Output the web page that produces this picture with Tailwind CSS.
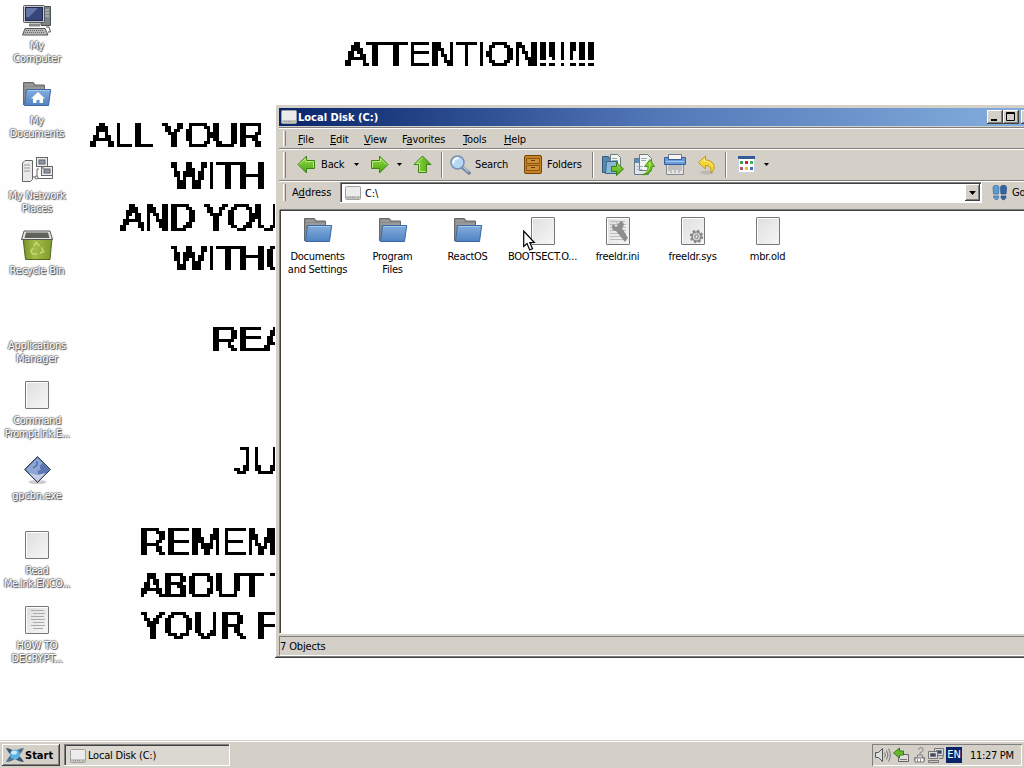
<!DOCTYPE html>
<html lang="en">
<head>
    <meta charset="UTF-8">
    <meta name="viewport" content="width=device-width, initial-scale=1.0">
    <title>Local Disk (C:)</title>
    <script src="https://cdn.jsdelivr.net/npm/@tailwindcss/browser@4"></script>
    <style>
        body {
            font-family: 'DejaVu Sans Condensed', 'DejaVu Sans', sans-serif;
            font-stretch: condensed;
        }
        /* Classic raised and sunken 3D borders */
        .raised {
            background-color: #d4d0c8;
            box-shadow: inset -1px -1px #404040, inset 1px 1px #ffffff, inset -2px -2px #808080;
        }
        .sunken {
            box-shadow: inset -1px -1px #ffffff, inset 1px 1px #808080, inset 2px 2px #404040;
        }
        .grip {
            width: 3px;
            border-left: 1px solid #ffffff;
            border-right: 1px solid #808080;
        }
        .divider {
            width: 2px;
            border-left: 1px solid #808080;
            border-right: 1px solid #ffffff;
        }
        .desk-label {
            color: #ffffff;
            letter-spacing: -0.2px;
            text-shadow: 1px 1px 1px #444444, -1px 0 1px #888888, 0 -1px 1px #999999, 0 0 2px #888888;
        }
    </style>
</head>
<body class="relative w-[1024px] h-[768px] overflow-hidden bg-[#fefefe] text-[11px] leading-[13px] text-black cursor-default">

    <!-- Shared icons -->
    <svg class="absolute size-0">
        <defs>
            <linearGradient id="blue" x1="0" y1="0" x2="0" y2="1"><stop offset="0" stop-color="#85aede"/><stop offset="1" stop-color="#4f83c2"/></linearGradient>
            <linearGradient id="paper" x1="0" y1="0" x2="1" y2="1"><stop offset="0" stop-color="#dedede"/><stop offset="1" stop-color="#f6f6f6"/></linearGradient>
            <linearGradient id="green" x1="0" y1="0" x2="0" y2="1"><stop offset="0" stop-color="#98dc48"/><stop offset="1" stop-color="#4aa512"/></linearGradient>
            <linearGradient id="bin" x1="0" y1="0" x2="1" y2="0"><stop offset="0" stop-color="#76902c"/><stop offset=".4" stop-color="#a3bd45"/><stop offset="1" stop-color="#7f9a30"/></linearGradient>
            <!-- Thickens the vertical stems, then samples the text into 3px blocks -->
            <filter id="blocks" filterUnits="userSpaceOnUse" x="0" y="0" width="1023" height="741">
                <feMorphology in="SourceGraphic" operator="dilate" radius="1 0" result="bold"/>
                <feFlood x="1" y="1" width="1" height="1" flood-color="#000"/>
                <feComposite in2="SourceGraphic" operator="over" x="0" y="0" width="3" height="3"/>
                <feTile result="grid"/>
                <feComposite in="bold" in2="grid" operator="in"/>
                <feComponentTransfer><feFuncA type="discrete" tableValues="0 1"/></feComponentTransfer>
                <feMorphology operator="dilate" radius="1"/>
            </filter>
        </defs>
        <symbol id="folder" viewBox="0 0 32 32">
            <path d="M2.500 25V2.500h10l1.500 2.500h9.500v6" fill="#8b8b8b" stroke="#686868"/>
            <path d="M4 5h8M4 8h19" stroke="#a8a8a8"/>
            <path d="M5.500 9.500h24.200L27.500 25.500H3.500Z" fill="url(#blue)" stroke="#3b68a4" stroke-linejoin="round"/>
            <path d="M6.500 10.500h22" stroke="#a5c5ec"/>
        </symbol>
        <symbol id="doc" viewBox="0 0 32 32">
            <rect x="4.500" y="1.500" width="23" height="27" rx=".5" fill="url(#paper)" stroke="#777"/>
            <path d="M5.500 27.500v-25h21" fill="none" stroke="#fff"/>
        </symbol>
        <symbol id="disk" viewBox="0 0 16 14">
            <rect x=".5" y=".5" width="15" height="13" rx="1" fill="#ececec" stroke="#a0a0a0"/>
            <path d="M1 10h14v3H1Z" fill="#c4c4c4"/>
            <path d="M3 11.500h8" stroke="#8c8c8c" stroke-dasharray="1 1"/>
            <path d="M12 11.500h2" stroke="#8fbf60"/>
        </symbol>
        <symbol id="caret" viewBox="0 0 5 3"><path d="M0 0h5L2.500 3Z" fill="#000"/></symbol>
        <symbol id="arrow" viewBox="0 0 19 19">
            <path d="M18 9.500 9.500 1v4.500h-8v8h8V18Z" fill="url(#green)" stroke="#3c8414" stroke-linejoin="round"/>
            <path d="M2.500 12.500v-6h8V3.500l6 6" fill="none" stroke="#b9ec7c"/>
        </symbol>
    </svg>

    <!-- Wallpaper message -->
    <svg class="absolute left-0 top-0" width="1024" height="740" font-family="Liberation Sans, sans-serif" font-size="36">
        <g filter="url(#blocks)">
            <text x="345" y="67" textLength="251" lengthAdjust="spacingAndGlyphs">ATTENTION!!!!!!</text>
            <text x="90" y="148" textLength="174" lengthAdjust="spacingAndGlyphs">ALL YOUR</text>
            <text x="172" y="189" textLength="93" lengthAdjust="spacingAndGlyphs">WITH</text>
            <text x="121" y="230" textLength="159" lengthAdjust="spacingAndGlyphs">AND YOU</text>
            <text x="172" y="271" textLength="122" lengthAdjust="spacingAndGlyphs">WITHO</text>
            <text x="212" y="352" textLength="76" lengthAdjust="spacingAndGlyphs">REA</text>
            <text x="233" y="474" textLength="46" lengthAdjust="spacingAndGlyphs">JU</text>
            <text x="140" y="555" textLength="137" lengthAdjust="spacingAndGlyphs">REMEM</text>
            <text x="140" y="598" textLength="153" lengthAdjust="spacingAndGlyphs">ABOUT T</text>
            <text x="140" y="638" textLength="138" lengthAdjust="spacingAndGlyphs">YOUR F</text>
        </g>
    </svg>

    <!-- Desktop icons -->
    <div class="relative w-[74px] grid auto-rows-[75px] text-center">
        <div class="pt-[5px] flex flex-col items-center">
            <svg class="h-8 w-8 shrink-0" viewBox="0 0 32 32">
                <path d="M20 1.500h9.500v19H20Z" fill="#7e8588" stroke="#4d5254"/>
                <path d="M24 5h4M24 8h4M24 11h4" stroke="#c3c9ca"/>
                <rect x="2.500" y=".5" width="21" height="17" rx="1" fill="#c9cbc9" stroke="#55585c"/>
                <rect x="4.500" y="2.500" width="17" height="13" fill="#36457a" stroke="#1e2850"/>
                <path d="M5 3h12L8 12H5Z" fill="#6475a8"/>
                <path d="M8 18.500h11v3H8Z" fill="#888"/>
                <path d="M4 23.500h20l3 6.500H1.500Z" fill="#b8b8b8" stroke="#555"/>
                <path d="M5 25.500h17M4 27.500h20" stroke="#666" stroke-dasharray="1 1"/>
                <path d="M25 22h3l1.500 5h-2.500" fill="none" stroke="#555"/>
            </svg>
            <div class="desk-label mt-[2px]">My<br>Computer</div>
        </div>
        <div class="pt-[5px] flex flex-col items-center">
            <svg class="h-8 w-8 shrink-0" viewBox="0 0 32 32">
                <use href="#folder"/>
                <path d="m17 12 7 6.500h-2V23h-3.500v-3h-3v3H12v-4.500h-2Z" fill="#fff"/>
            </svg>
            <div class="desk-label mt-[2px]">My<br>Documents</div>
        </div>
        <div class="pt-[5px] flex flex-col items-center">
            <svg class="h-8 w-8 shrink-0" viewBox="0 0 32 32" fill="#e9e9e9" stroke="#666">
                <path d="M1.500 8 4 5.500h7.500v19l-2 2h-8Z"/>
                <path d="M3 10h6M3 13h6M3 16h6" stroke="#999"/>
                <rect x="15.500" y="2.500" width="11" height="9"/><rect x="18" y="5" width="6" height="4" fill="#8994ad"/>
                <rect x="20.500" y="11.500" width="11" height="9"/><rect x="23" y="14" width="6" height="4" fill="#8994ad"/>
                <path d="M11 22h5v-8h2M15 23.500h16.500v-3M22 11v3" fill="none"/>
                <circle cx="15.500" cy="22.500" r="1.500"/>
            </svg>
            <div class="desk-label mt-[2px] whitespace-nowrap">My Network<br>Places</div>
        </div>
        <div class="pt-[5px] flex flex-col items-center">
            <svg class="h-8 w-8 shrink-0" viewBox="0 0 32 32">
                <path d="M2 8h29l-2 21.500H4.500Z" fill="url(#bin)" stroke="#52661d"/>
                <path d="M3 1h26l2.500 8.500H.5Z" fill="#e4e7df" stroke="#555"/>
                <path d="M5 2.500h22L28.500 8H3.500Z" fill="#5d625a"/>
                <g fill="none" stroke="#c6d97c" stroke-width="1.500">
                    <path d="m13 16 2.500-3.500 3 3.500M20.500 17.500l2 4-3.500 1.500M16 24h-4.500l-1.500-3 2-3"/>
                </g>
            </svg>
            <div class="desk-label mt-[2px] whitespace-nowrap">Recycle Bin</div>
        </div>
        <div class="pt-[39px]">
            <div class="desk-label">Applications<br>Manager</div>
        </div>
        <div class="pt-[5px] flex flex-col items-center">
            <svg class="h-8 w-8 shrink-0"><use href="#doc"/></svg>
            <div class="desk-label mt-[2px] tracking-[-0.5px]! whitespace-nowrap">Command<br>Prompt.lnk.E...</div>
        </div>
        <div class="pt-[5px] flex flex-col items-center">
            <svg class="h-8 w-8 shrink-0" viewBox="0 0 32 32">
                <ellipse cx="16.500" cy="27" rx="9" ry="2" fill="#ccc"/>
                <path d="m16.500 1.500 13 13-13 13-13-13Z" fill="#5c79b5" stroke="#363b45"/>
                <path d="m16.500 3 5 5-3 3 2 3-4 2 1 4-5 2-7.500-7.500Z" fill="#8ea6d5"/>
                <path d="m8 18 8.500 8.500L25 18l-9 2Z" fill="#c5cfe3"/>
                <path d="M16 6v4l-4 3M19 13h5" fill="none" stroke="#5570aa" stroke-width="1.500"/>
            </svg>
            <div class="desk-label mt-[2px]">gpcbn.exe</div>
        </div>
        <div class="pt-[5px] flex flex-col items-center">
            <svg class="h-8 w-8 shrink-0"><use href="#doc"/></svg>
            <div class="desk-label mt-[2px] tracking-[-0.5px]! whitespace-nowrap">Read<br>Me.lnk.ENCO...</div>
        </div>
        <div class="pt-[5px] flex flex-col items-center">
            <svg class="h-8 w-8 shrink-0" viewBox="0 0 32 32">
                <use href="#doc"/>
                <path d="M10 5.500h13M12 8.500h12M10 11.500h13M10 14.500h14M12 17.500h11M10 20.500h14M12 23.500h10" stroke="#aaa"/>
            </svg>
            <div class="desk-label mt-[2px] whitespace-nowrap">HOW TO<br>DECRYPT...</div>
        </div>
    </div>

    <!-- Explorer window -->
    <div class="raised absolute left-[275px] top-[104px] w-[768px] h-[554px] pt-1 px-1 flex flex-col tracking-[-0.15px]">
        <!-- Title bar -->
        <div class="h-[18px] shrink-0 flex items-center bg-linear-to-r from-[#0a246a] via-[#5378b8] to-[#86b0de] pl-[2px] pr-[2px] text-white font-bold tracking-normal">
            <svg class="w-4 h-[14px]"><use href="#disk"/></svg>
            <span class="ml-px flex-1">Local Disk (C:)</span>
            <div class="flex text-black">
                <div class="raised w-4 h-[14px]"><svg width="16" height="14"><path d="M4 9h6v2H4Z"/></svg></div>
                <div class="raised w-4 h-[14px]"><svg width="16" height="14" fill="none" stroke="#000"><path d="M3.500 2.500h8v8h-8ZM3 3.500h9"/></svg></div>
                <div class="raised ml-[2px] w-4 h-[14px]"></div>
            </div>
        </div>

        <!-- Menu bar -->
        <div class="mt-px h-[21px] shrink-0 flex items-center border-t border-[#808080] shadow-[inset_0_1px_#fff] pl-1">
            <div class="grip h-[15px]"></div>
            <div class="ml-3 pt-[2px] flex gap-4 leading-[15px]">
                <span class="w-4"><u>F</u>ile</span>
                <span class="w-[18px]"><u>E</u>dit</span>
                <span class="w-[22px]"><u>V</u>iew</span>
                <span class="w-[45px]">F<u>a</u>vorites</span>
                <span class="w-[25px]"><u>T</u>ools</span>
                <span><u>H</u>elp</span>
            </div>
        </div>

        <!-- Toolbar -->
        <div class="h-[32px] shrink-0 flex items-center border-t border-[#808080] shadow-[inset_0_1px_#fff] pl-1">
            <div class="grip h-[26px]"></div>
            <svg class="ml-[11px] w-[19px] h-[19px] -scale-x-100"><use href="#arrow"/></svg>
            <span class="ml-[5px] w-[33px]">Back</span>
            <svg class="w-[5px] h-[3px]"><use href="#caret"/></svg>
            <svg class="ml-[11px] w-[19px] h-[19px]"><use href="#arrow"/></svg>
            <svg class="ml-2 w-[5px] h-[3px]"><use href="#caret"/></svg>
            <svg class="ml-[11px] w-[19px] h-[19px] -rotate-90"><use href="#arrow"/></svg>
            <div class="divider ml-[9px] h-[26px]"></div>
            <svg class="ml-[7px] w-[21px] h-[20px]" viewBox="0 0 21 20">
                <path d="m12 12 7 6" stroke="#6a7f9c" stroke-width="3.500" stroke-linecap="round"/>
                <path d="m13 12 5.500 5" stroke="#b9c9df" stroke-width="1.500"/>
                <circle cx="7.500" cy="7.500" r="6.500" fill="#b7d8f5" stroke="#768fb2" stroke-width="1.500"/>
                <path d="M3.500 8.500a4 4 0 0 1 5-5" fill="none" stroke="#fff" stroke-width="2"/>
            </svg>
            <span class="ml-1 w-[49px]">Search</span>
            <svg class="w-[18px] h-[19px]" viewBox="0 0 18 19">
                <rect x=".5" y=".5" width="17" height="18" rx="1.500" fill="#c78425" stroke="#754207"/>
                <path d="M2.500 3.500h13v5h-13ZM2.500 10.500h13v5h-13Z" fill="#cd8f38" stroke="#8b560f"/>
                <path d="M7 5.500h4M7 12.500h4" stroke="#6c3a00"/>
            </svg>
            <span class="ml-[5px] w-[45px]">Folders</span>
            <div class="divider h-[26px]"></div>
            <!-- Move to -->
            <svg class="ml-2 w-[22px] h-[22px]" viewBox="0 0 22 22">
                <path d="M.5 2.500h6l1 2h7v14H.5Z" fill="#5888ad" stroke="#315a80"/>
                <path d="M8.500.5h7l3 3v11h-10Z" fill="#f3f6ef" stroke="#687c81"/>
                <path d="M10 4.500h5M10 6.500h6" stroke="#9aa"/>
                <path d="M4.500 7.500h11v12h-12Z" fill="#8cb6d5" stroke="#39678d"/>
                <path d="M9.500 12.500h5v-4l7 6.500-7 6.500v-4h-5Z" fill="url(#green)" stroke="#397d12"/>
            </svg>
            <!-- Copy to -->
            <svg class="ml-[10px] w-[21px] h-[22px]" viewBox="0 0 21 22">
                <path d="M.5 4.500h14v16H.5Z" fill="#dfe6ee" stroke="#65798d"/>
                <path d="M1 5h6v4H1Z" fill="#5c8cb5"/>
                <path d="M5.500.5h8l4 4v12h-12Z" fill="#f4f6f4" stroke="#697d80"/>
                <path d="M7 4.500h6M7 6.500h5M3 12.500h6M3 15.500h5" stroke="#9ab"/>
                <path d="M7 20.500c5 0 7-3 7-8h-3.500L16 5.500l4.500 7H18c0 6-5 9-11 8Z" fill="url(#green)" stroke="#4b9217"/>
                <path d="M12 18c3-2 4-4 4-9" fill="none" stroke="#d9f05c"/>
            </svg>
            <!-- Delete -->
            <svg class="ml-[9px] w-[22px] h-[22px]" viewBox="0 0 22 22">
                <path d="M4.500.5h13v6h-13Z" fill="#f5f5f5" stroke="#778"/>
                <path d="M2.500 10.500h17v10h-17Z" fill="#e5e5e5" stroke="#888"/>
                <path d="M5 11v6M7 11v8M9 11v5M11 11v8M13 11v5M15 11v8M17 11v6" stroke="#999"/>
                <path d="M.5 3.500h4v2h13v-2h4v7H.5Z" fill="#6b9cda" stroke="#355f9c"/>
                <path d="M2 7.500h18" stroke="#a9c8ef"/>
            </svg>
            <!-- Undo -->
            <svg class="ml-[12px] w-[19px] h-[20px]" viewBox="0 0 19 20">
                <ellipse cx="9" cy="17.500" rx="7" ry="2" fill="#bdb9ae"/>
                <path d="M.5 7.500 7.500 1v4c6 0 9.500 4 8.500 9l-3 4c.5-5-1-7.500-5.500-7.500V14Z" fill="#f5d331" stroke="#c59a15" stroke-linejoin="round"/>
                <path d="m2.500 7.500 4-3.500v2c4 0 7 2 8 5" fill="none" stroke="#fff09a"/>
            </svg>
            <div class="divider ml-2 h-[26px]"></div>
            <!-- Views -->
            <svg class="ml-[11px] w-[17px] h-[17px]" viewBox="0 0 17 17">
                <path d="M.5.5h16v16H.5Z" fill="#fff" stroke="#ccd3df"/>
                <path d="M0 0h17v3H0Z" fill="#345a98"/>
                <path d="M2 5h3v3H2Z" fill="#4d9a54"/><path d="M7 5h3v3H7Z" fill="#c92632"/><path d="M12 5h3v3h-3Z" fill="#49ae53"/>
                <path d="M2 11h3v3H2Z" fill="#ba5465"/><path d="M7 11h3v3H7Z" fill="#e9c719"/><path d="M12 11h3v3h-3Z" fill="#426bb2"/>
            </svg>
            <svg class="ml-[9px] w-[5px] h-[3px]"><use href="#caret"/></svg>
        </div>

        <!-- Address bar -->
        <div class="h-[24px] shrink-0 flex items-center border-t border-[#808080] shadow-[inset_0_1px_#fff] pl-1">
            <div class="grip h-[17px]"></div>
            <span class="ml-[6px] w-[48px] leading-[15px] tracking-normal">A<u>d</u>dress</span>
            <div class="sunken w-[642px] h-[21px] bg-white flex items-center pl-[5px] pr-[2px]">
                <svg class="w-4 h-[14px]"><use href="#disk"/></svg>
                <span class="ml-1 flex-1 pt-px">C:\</span>
                <div class="raised w-[15px] h-[17px] flex items-center justify-center">
                    <svg class="w-[7px] h-[4px]"><use href="#caret"/></svg>
                </div>
            </div>
            <svg class="ml-[10px] w-[15px] h-[16px] shrink-0" viewBox="0 0 15 16">
                <path d="M1 3c0-4 6-4 6 0L6.500 9h-5ZM1.500 11h5c.5 5-4.500 5-5 0Z" fill="#5d9ad0" stroke="#396c9f" stroke-width=".7"/>
                <path d="M8.500 3c0-4 6-4 6 0L14 9H9ZM9 11h5c0 5-5 5-5 0Z" fill="#3165a3" stroke="#234b80" stroke-width=".7"/>
            </svg>
            <span class="ml-[5px]">Go</span>
        </div>

        <!-- File list -->
        <div class="mt-[6px] h-[423px] ml-px shrink-0 bg-white pt-[6px] shadow-[inset_1px_1px_#404040,0_-1px_#808080,-1px_0_#808080,0_1px_#fff]">
            <div class="grid grid-cols-[repeat(7,75px)] text-center tracking-[-0.25px]">
                <div class="flex flex-col items-center">
                    <svg class="h-8 w-8"><use href="#folder"/></svg>
                    <div class="mt-[2px] whitespace-nowrap">Documents<br>and Settings</div>
                </div>
                <div class="flex flex-col items-center">
                    <svg class="h-8 w-8"><use href="#folder"/></svg>
                    <div class="mt-[2px]">Program<br>Files</div>
                </div>
                <div class="flex flex-col items-center">
                    <svg class="h-8 w-8"><use href="#folder"/></svg>
                    <div class="mt-[2px]">ReactOS</div>
                </div>
                <div class="flex flex-col items-center">
                    <svg class="h-8 w-8"><use href="#doc"/></svg>
                    <div class="mt-[2px]">BOOTSECT.O...</div>
                </div>
                <div class="flex flex-col items-center">
                    <svg class="h-8 w-8" viewBox="0 0 32 32">
                        <use href="#doc"/>
                        <path d="M8 5.500h15M8 8.500h16M8 11.500h16M8 14.500h16M8 17.500h16M8 20.500h15M8 23.500h13" stroke="#bbb"/>
                        <path d="m13 5 3 3 3-3c4 2 3 6 1 7l6 10-3 4-9-11c-4 0-5-4-3-7l3 3 2-2Z" fill="#8e8e8e"/>
                    </svg>
                    <div class="mt-[2px]">freeldr.ini</div>
                </div>
                <div class="flex flex-col items-center">
                    <svg class="h-8 w-8" viewBox="0 0 32 32">
                        <use href="#doc"/>
                        <circle cx="19.500" cy="20.500" r="5.500" fill="#bbb" stroke="#888" stroke-width="2.500" stroke-dasharray="2.300 2"/>
                        <circle cx="19.500" cy="20.500" r="4.500" fill="#ccc" stroke="#777"/>
                        <circle cx="19.500" cy="20.500" r="1.700" fill="#eee" stroke="#777"/>
                    </svg>
                    <div class="mt-[2px]">freeldr.sys</div>
                </div>
                <div class="flex flex-col items-center">
                    <svg class="h-8 w-8"><use href="#doc"/></svg>
                    <div class="mt-[2px]">mbr.old</div>
                </div>
            </div>
        </div>

        <!-- Status bar -->
        <div class="mt-[3px] h-[20px] shrink-0 border-t border-l border-[#808080] border-b-white border-b flex items-center">7 Objects</div>
    </div>

    <!-- Mouse pointer -->
    <svg class="absolute left-[523px] top-[230px]" width="13" height="21" viewBox="0 0 13 21">
        <path d="M.7 1v15.500l3.300-3 2.700 6.500 2.800-1.200L6.800 12.500h4.500Z" fill="#fff" stroke="#000" stroke-width="1.200"/>
    </svg>

    <!-- Taskbar -->
    <div class="absolute left-0 bottom-0 w-full h-[28px] bg-[#d4d0c8] border-t border-[#d4d0c8] shadow-[inset_0_1px_#fff] pt-[3px] pl-[2px] pr-[2px] flex">
        <div class="raised w-[58px] h-[22px] flex items-center pl-1 font-bold">
            <svg class="w-[18px] h-[16px]" viewBox="0 0 18 16">
                <path d="M0 1c5 0 13 6 18 14-7 0-14-6-18-14Z" fill="#3c5870"/>
                <path d="M18 1C12 1 4 6 0 15c7 0 14-6 18-14Z" fill="#52758e"/>
                <circle cx="9" cy="7.500" r="5" fill="#5cb2e3"/>
                <ellipse cx="8" cy="5.500" rx="3" ry="2" fill="#c8ebfb"/>
            </svg>
            <span class="ml-px">Start</span>
        </div>
        <div class="sunken ml-1 w-[166px] h-[22px] bg-[#dbd8d1] flex items-center pl-[6px] pt-px">
            <svg class="w-4 h-[14px]"><use href="#disk"/></svg>
            <span class="ml-[2px] tracking-[-0.2px]">Local Disk (C:)</span>
        </div>
        <div class="ml-auto w-[150px] h-[22px] shadow-[inset_1px_1px_#808080,inset_-1px_-1px_#fff] flex items-center pl-[2px]">
            <svg class="w-[17px] h-4" viewBox="0 0 17 16" fill="none" stroke="#777">
                <path d="M1.500 5.500h3l4-4v13l-4-4h-3Z" fill="#ddd" stroke="#555"/>
                <path d="M10.500 5.500q2 2.500 0 5M12.500 3.500q3 4.500 0 9M14.500 1.500q3.500 6.500 0 13"/>
            </svg>
            <svg class="ml-[2px] w-4 h-4" viewBox="0 0 16 16">
                <path d="M5.500 7.500h10v7h-10Z" fill="#ddd" stroke="#666"/><path d="M7 12.500h7" stroke="#777"/>
                <path d="m.5 6 6-5v3h4v4h-4v3Z" fill="#69b92f" stroke="#357c14"/>
            </svg>
            <svg class="ml-[4px] w-[13px] h-4" viewBox="0 0 13 16">
                <path d="M5.500 3q0-2.500 2.500-2.500T10 3 7 5.500V8M7 8H4.500v2.500h-3v3h10v-3h-2V8Z" fill="none" stroke="#888"/>
                <path d="M2 11h9v4H2Z" fill="#fff" stroke="#777"/><path d="M4.500 12v3M7.500 12v3" stroke="#888"/>
            </svg>
            <svg class="ml-[2px] w-4 h-4" viewBox="0 0 16 16" stroke="#777">
                <path d="M6.500 1.500h9v7h-9Z" fill="#ddd"/><path d="M8.500 3.500h5v3h-5Z" fill="#34467c"/>
                <path d="M.5 4.500h9v7h-9Z" fill="#ddd"/><path d="M2.500 6.500h5v3h-5Z" fill="#34467c"/>
                <path d="M.5 13.500h10v2H.5ZM11 11.500h4v-3" fill="#ccc"/>
            </svg>
            <div class="ml-[2px] w-4 h-4 bg-[#0a246a] text-white text-center leading-4">EN</div>
            <span class="ml-2 whitespace-nowrap tracking-[-0.3px]">11:27 PM</span>
        </div>
    </div>
</body>
</html>
